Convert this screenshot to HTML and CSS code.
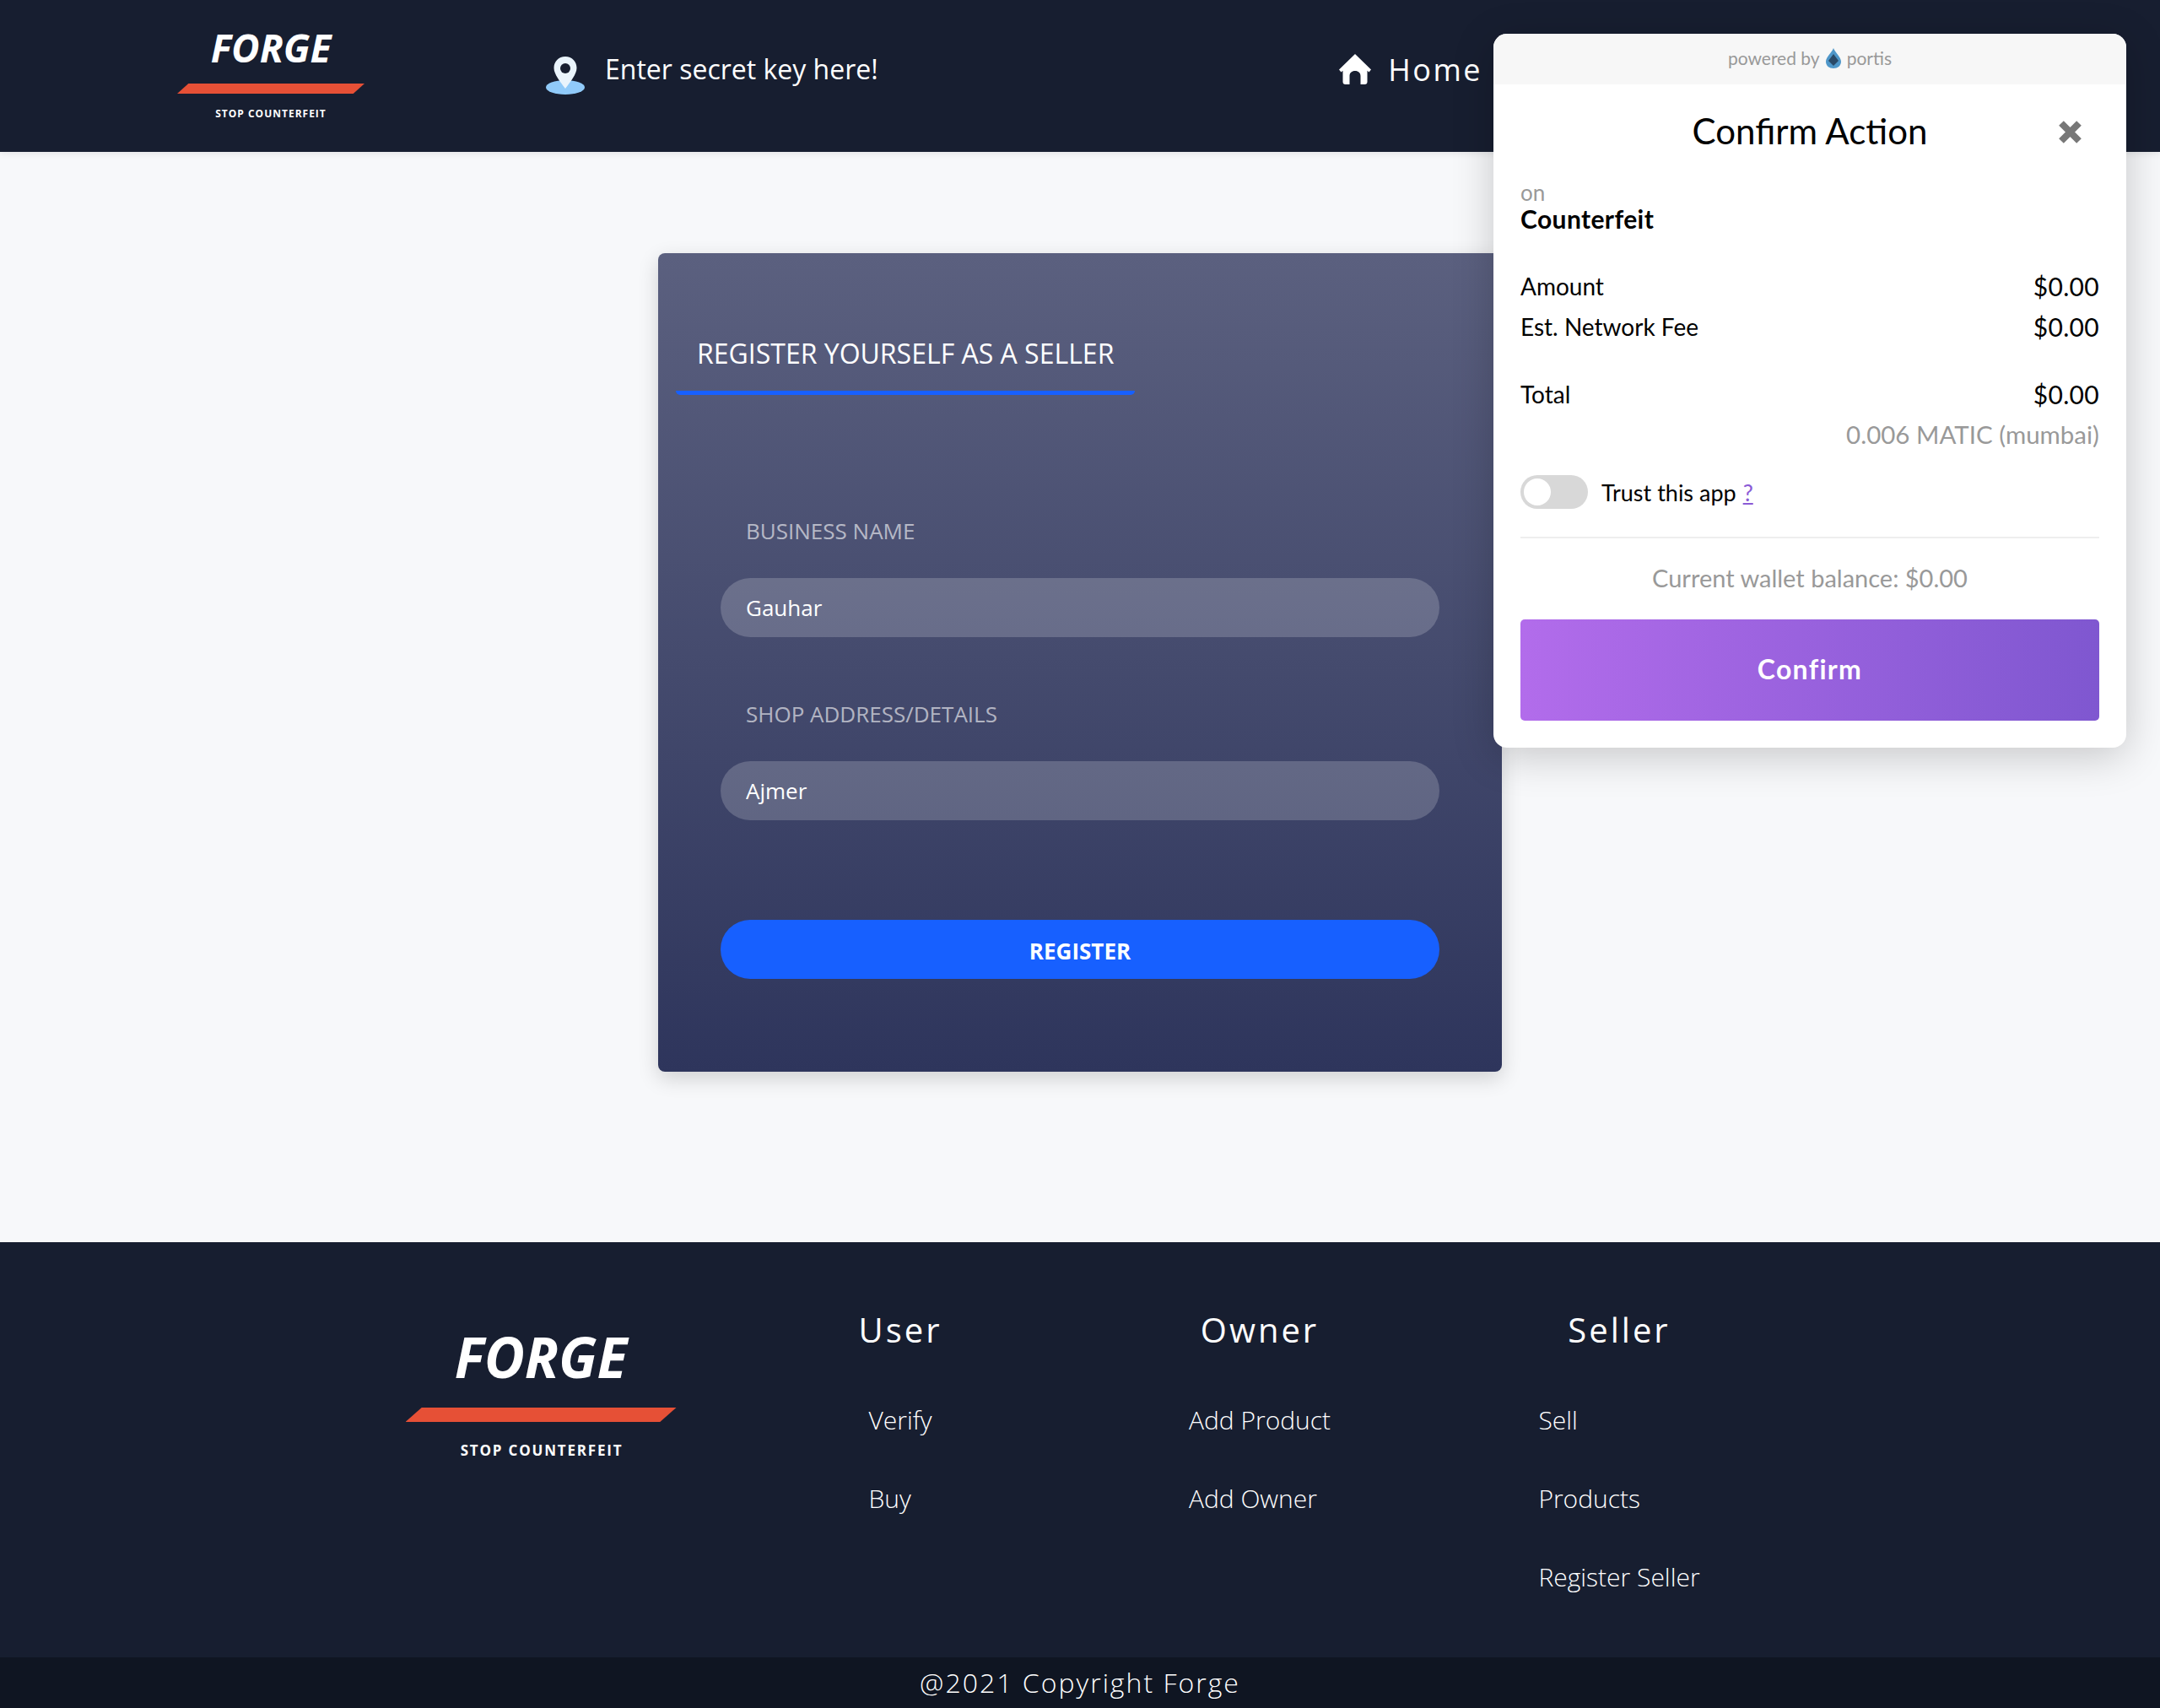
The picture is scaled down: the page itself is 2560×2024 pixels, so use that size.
FILE: index.html
```html
<!DOCTYPE html>
<html lang="en">
<head>
    <meta charset="UTF-8">
    <meta name="viewport" content="width=device-width, initial-scale=1.0">
    <title>Forge</title>
    <link rel="stylesheet" href="styles.css">
</head>
<body>
    <header class="topbar">
        <div class="logo logo-small">
            <div class="logo-name">FORGE</div>
            <div class="logo-bar"></div>
            <div class="logo-tag">STOP COUNTERFEIT</div>
        </div>
        <div class="secret">
            <svg class="pin-icon" viewBox="0 0 46 46" width="46" height="46">
                <ellipse cx="23" cy="36.5" rx="23" ry="8.5" fill="#90caf9"/>
                <path d="M23 0C15 0 9.500 6 9.500 13.500C9.500 21 17 30 23 38C29 30 36.500 21 36.500 13.500C36.500 6 31 0 23 0Z" fill="#eaf4fc"/>
                <circle cx="23" cy="14" r="6" fill="#171e30"/>
            </svg>
            <span>Enter secret key here!</span>
        </div>
        <a class="home-link" href="#">
            <svg class="home-icon" viewBox="0 0 38 36" width="38" height="36">
                <path d="M19 0L38 18.500L35.500 21.500L33.500 19.800V33C33.500 34.800 32.300 36 30.500 36H25.500V26C25.500 22.500 23 20 19 20C15 20 12.500 22.500 12.500 26V36H7.500C5.700 36 4.500 34.800 4.500 33V19.800L2.500 21.500L0 18.500Z" fill="#fff"/>
            </svg>
            <span>Home</span>
        </a>
    </header>

    <main class="content">
        <section class="card">
            <div class="card-heading">
                <h2>REGISTER YOURSELF AS A SELLER</h2>
            </div>
            <form class="seller-form">
                <label for="business">BUSINESS NAME</label>
                <input id="business" type="text" value="Gauhar">
                <label for="address">SHOP ADDRESS/DETAILS</label>
                <input id="address" type="text" value="Ajmer">
                <button type="button">REGISTER</button>
            </form>
        </section>
    </main>

    <footer>
        <div class="footer-grid">
            <div class="logo logo-large">
                <div class="logo-name">FORGE</div>
                <div class="logo-bar"></div>
                <div class="logo-tag">STOP COUNTERFEIT</div>
            </div>
            <div class="footer-col">
                <h3>User</h3>
                <ul>
                    <li><a href="#">Verify</a></li>
                    <li><a href="#">Buy</a></li>
                </ul>
            </div>
            <div class="footer-col">
                <h3>Owner</h3>
                <ul>
                    <li><a href="#">Add Product</a></li>
                    <li><a href="#">Add Owner</a></li>
                </ul>
            </div>
            <div class="footer-col">
                <h3>Seller</h3>
                <ul>
                    <li><a href="#">Sell</a></li>
                    <li><a href="#">Products</a></li>
                    <li><a href="#">Register Seller</a></li>
                </ul>
            </div>
        </div>
        <div class="copyright">@2021 Copyright Forge</div>
    </footer>

    <!-- Portis popup -->
    <div class="portis">
        <div class="portis-top">
            <span>powered by</span>
            <svg viewBox="0 0 18 24" width="18" height="24">
                <path d="M9 0C11 5 18 11 18 16C18 21 14 24 9 24C4 24 0 21 0 16C0 11 7 5 9 0Z" fill="#4f97c9"/>
                <path d="M9 7L15 15L9 21L3 15Z" fill="#2a4a68"/>
            </svg>
            <span>portis</span>
        </div>
        <div class="portis-body">
            <div class="portis-title">
                <h1>Confirm Action</h1>
                <svg class="portis-close" viewBox="0 0 27 27" width="27" height="27">
                    <path d="M3 3L24 24M24 3L3 24" stroke="#777" stroke-width="8"/>
                </svg>
            </div>
            <div class="portis-on">on</div>
            <div class="portis-app">Counterfeit</div>
            <div class="row row-amount"><span>Amount</span><span class="row-value">$0.00</span></div>
            <div class="row"><span>Est. Network Fee</span><span class="row-value">$0.00</span></div>
            <div class="row row-total"><span>Total</span><span class="row-value">$0.00</span></div>
            <div class="row row-matic"><span></span><span class="row-value">0.006 MATIC (mumbai)</span></div>
            <div class="trust">
                <div class="toggle"><div class="knob"></div></div>
                <span>Trust this app</span>
                <a href="#">?</a>
            </div>
            <div class="balance">Current wallet balance: $0.00</div>
            <button class="confirm" type="button">Confirm</button>
        </div>
    </div>
</body>
</html>
```

FILE: styles.css
```css
body {
    font-family: "Open Sans", sans-serif;
    margin: 0;
    background-color: #f7f8fa;
    color: white;
    position: relative;
}
a {
    color: inherit;
    text-decoration: none;
}

/* top bar */
.topbar {
    height: 180px;
    background-color: #171e30;
    display: flex;
    align-items: center;
    padding: 0 803px 0 210px;
    box-shadow: 0 2px 8px rgba(0, 0, 0, 0.08);
    position: relative;
}
.secret {
    display: flex;
    align-items: flex-start;
    margin-left: 215px;
    margin-top: -6px;
    font-size: 32px;
    line-height: 44px;
}
.pin-icon {
    margin: 6px 24px 0 0;
}
.secret span {
    margin-top: -1px;
}
.home-link {
    margin-left: auto;
    display: flex;
    align-items: center;
    font-size: 36px;
    letter-spacing: 2.5px;
    margin-top: -15px;
}
.home-icon {
    margin-right: 20px;
    margin-top: -2px;
}

/* logo */
.logo {
    display: flex;
    flex-direction: column;
    align-items: center;
}
.logo-name {
    font-weight: 700;
    font-style: italic;
}
.logo-bar {
    background-color: #e65036;
    clip-path: polygon(6% 0, 100% 0, 94% 100%, 0 100%);
}
.logo-tag {
    font-weight: 700;
}
.logo-small {
    width: 222px;
    margin-top: -6px;
}
.logo-small .logo-name {
    font-size: 46px;
    line-height: 50px;
}
.logo-small .logo-bar {
    width: 222px;
    height: 12px;
    margin-top: 18px;
}
.logo-small .logo-tag {
    font-size: 12px;
    line-height: 16px;
    letter-spacing: 1px;
    margin-top: 16px;
}
.logo-large {
    padding-top: 100px;
}
.logo-large .logo-name {
    font-size: 66px;
    line-height: 70px;
}
.logo-large .logo-bar {
    width: 321px;
    height: 17px;
    margin-top: 26px;
}
.logo-large .logo-tag {
    font-size: 17px;
    line-height: 24px;
    letter-spacing: 1.8px;
    margin-top: 22px;
    padding-left: 2px;
}

/* register card */
.content {
    height: 1292px;
    padding-top: 120px;
    box-sizing: border-box;
}
.card {
    width: 1000px;
    height: 970px;
    margin: 0 auto;
    border-radius: 8px;
    background: linear-gradient(180deg, #5b607f 0%, #2e355c 100%);
    box-shadow: 0 8px 24px rgba(0, 0, 0, 0.16);
    box-sizing: border-box;
    padding: 90px 21px 0;
}
.card-heading {
    width: 544px;
    height: 73px;
    border-bottom: 5px solid #1760ff;
    border-radius: 0 0 5px 5px;
}
.card-heading h2 {
    margin: 0;
    padding-left: 25px;
    font-size: 32px;
    font-weight: 400;
    line-height: 58px;
}
.seller-form {
    display: flex;
    flex-direction: column;
    padding: 0 53px;
    margin-top: 143px;
}
.seller-form label {
    font-size: 26px;
    line-height: 36px;
    padding-left: 30px;
    color: rgba(255, 255, 255, 0.6);
    margin-bottom: 38px;
}
.seller-form input {
    height: 70px;
    border: none;
    border-radius: 35px;
    background-color: rgba(255, 255, 255, 0.19);
    color: white;
    font-family: inherit;
    font-size: 26px;
    padding: 0 30px;
    margin-bottom: 73px;
    box-sizing: border-box;
    outline: none;
}
.seller-form button {
    height: 70px;
    border: none;
    border-radius: 35px;
    background-color: #1760ff;
    color: white;
    font-family: inherit;
    font-size: 26px;
    font-weight: 700;
    padding-top: 4px;
    margin-top: 45px;
}

/* footer */
footer {
    background-color: #171e30;
}
.footer-grid {
    width: 1704px;
    height: 492px;
    margin: 0 auto;
    display: grid;
    grid-template-columns: repeat(4, 426px);
}
.footer-col {
    display: flex;
    flex-direction: column;
    align-items: center;
    padding-top: 76px;
}
.footer-col h3 {
    margin: 0;
    font-size: 40px;
    font-weight: 400;
    line-height: 56px;
    letter-spacing: 3px;
}
.footer-col ul {
    list-style: none;
    margin: 0;
    padding: 0;
    margin-top: 57px;
}
.footer-col li {
    font-size: 30px;
    font-weight: 300;
    line-height: 44px;
    margin-bottom: 49px;
}
.copyright {
    height: 60px;
    background-color: #0f1522;
    text-align: center;
    font-size: 32px;
    font-weight: 300;
    line-height: 60px;
    letter-spacing: 2px;
}

/* portis popup */
.portis {
    position: absolute;
    top: 40px;
    left: 1770px;
    width: 750px;
    height: 846px;
    background-color: white;
    border-radius: 16px;
    box-shadow: 0 10px 50px rgba(0, 0, 0, 0.2);
    color: black;
    font-family: Lato, sans-serif;
    overflow: hidden;
}
.portis-top {
    height: 60px;
    background-color: #f7f7f7;
    color: #999;
    font-size: 21px;
    display: flex;
    align-items: center;
    justify-content: center;
    gap: 7px;
    padding-bottom: 3px;
    box-sizing: border-box;
}
.portis-body {
    padding: 0 32px;
}
.portis-title {
    height: 112px;
    display: flex;
    align-items: center;
    justify-content: center;
    position: relative;
}
.portis-title h1 {
    margin: -3px 0 0;
    font-size: 42px;
    font-weight: 400;
}
.portis-close {
    position: absolute;
    right: 21px;
    top: 43px;
}
.portis-on {
    font-size: 26px;
    line-height: 32px;
    color: #999;
}
.portis-app {
    font-size: 30px;
    font-weight: 700;
    line-height: 36px;
    letter-spacing: 0.4px;
    margin-top: -3px;
}
.row {
    display: flex;
    justify-content: space-between;
    font-size: 28px;
    line-height: 48px;
}
.row-value {
    font-size: 30px;
    letter-spacing: 0.3px;
}
.row-amount {
    margin-top: 38px;
}
.row-total {
    margin-top: 32px;
}
.row-matic {
    color: #999;
}
.row-matic .row-value {
    font-size: 29.5px;
    letter-spacing: 0;
}
.trust {
    display: flex;
    align-items: center;
    font-size: 27px;
    margin-top: 24px;
    padding-bottom: 33px;
    border-bottom: 2px solid #eee;
}
.toggle {
    width: 80px;
    height: 40px;
    background-color: #d8d8d8;
    border-radius: 20px;
    display: flex;
    align-items: center;
    padding-left: 4px;
    box-sizing: border-box;
    margin-right: 16px;
}
.knob {
    width: 32px;
    height: 32px;
    background-color: white;
    border-radius: 50%;
}
.trust a {
    color: #8a5ad6;
    text-decoration: underline;
    margin-left: 8px;
}
.balance {
    text-align: center;
    color: #999;
    font-size: 29px;
    line-height: 48px;
    margin-top: 23px;
}
.confirm {
    display: block;
    width: 100%;
    height: 120px;
    margin-top: 25px;
    border: none;
    border-radius: 5px;
    background: linear-gradient(90deg, #b26ceb, #7f57d0);
    color: white;
    font-family: inherit;
    font-size: 32px;
    font-weight: 700;
    letter-spacing: 1.3px;
    padding-bottom: 4px;
}
```
